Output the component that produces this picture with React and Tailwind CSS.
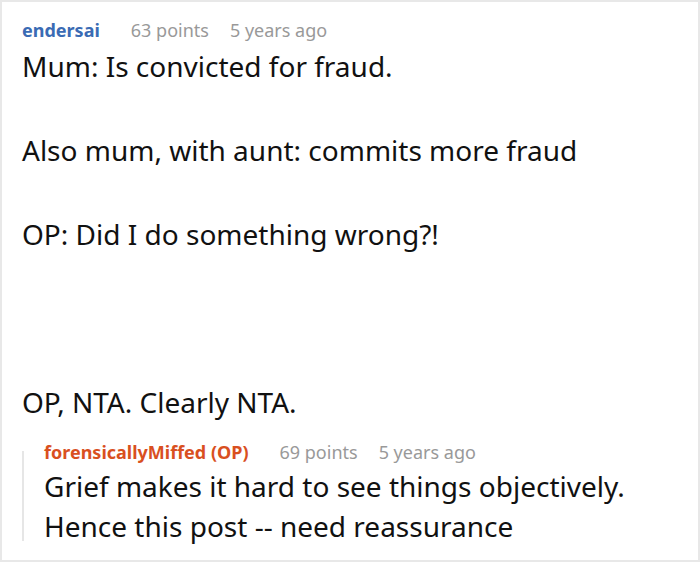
import React from "react";

const comment = {
  author: "endersai",
  points: "63 points",
  age: "5 years ago",
  lines: [
    "Mum: Is convicted for fraud.",
    "",
    "Also mum, with aunt: commits more fraud",
    "",
    "OP: Did I do something wrong?!",
    "",
    "",
    "",
    "OP, NTA. Clearly NTA.",
  ],
};

const reply = {
  author: "forensicallyMiffed (OP)",
  points: "69 points",
  age: "5 years ago",
  lines: ["Grief makes it hard to see things objectively.", "Hence this post -- need reassurance"],
};

function Meta({ author, points, age, color }) {
  return (
    <div className="flex items-baseline text-[18px] leading-[24px]">
      <span className={`font-bold ${color}`}>{author}</span>
      <span className="ml-[31px] text-[#999999]">{points}</span>
      <span className="ml-[21px] text-[#999999]">{age}</span>
    </div>
  );
}

export default function App() {
  return (
    <div
      className="w-[700px] h-[562px] overflow-hidden border-2 border-[#e8e8e8] bg-white text-[#111111]"
      style={{ fontFamily: '"Noto Sans", "Open Sans", sans-serif' }}
    >
      <div className="pl-[20px] pt-[16px]">
        <Meta {...comment} color="text-[#3a6bb4]" />
        <div className="mt-[3px] text-[28px] leading-[42px]">
          {comment.lines.map((line, i) => (
            <div key={i} className="h-[42px]">
              {line}
            </div>
          ))}
        </div>

        <div className="mt-[17px] flex">
          <div className="w-[2px] mt-[11px] mb-[5px] bg-[#e6e6e6]" />
          <div className="ml-[20px]">
            <Meta {...reply} color="text-[#d9501f]" />
            <div className="mt-[2px] text-[28px] leading-[40px]">
              {reply.lines.map((line, i) => (
                <div key={i}>{line}</div>
              ))}
            </div>
          </div>
        </div>
      </div>
    </div>
  );
}
